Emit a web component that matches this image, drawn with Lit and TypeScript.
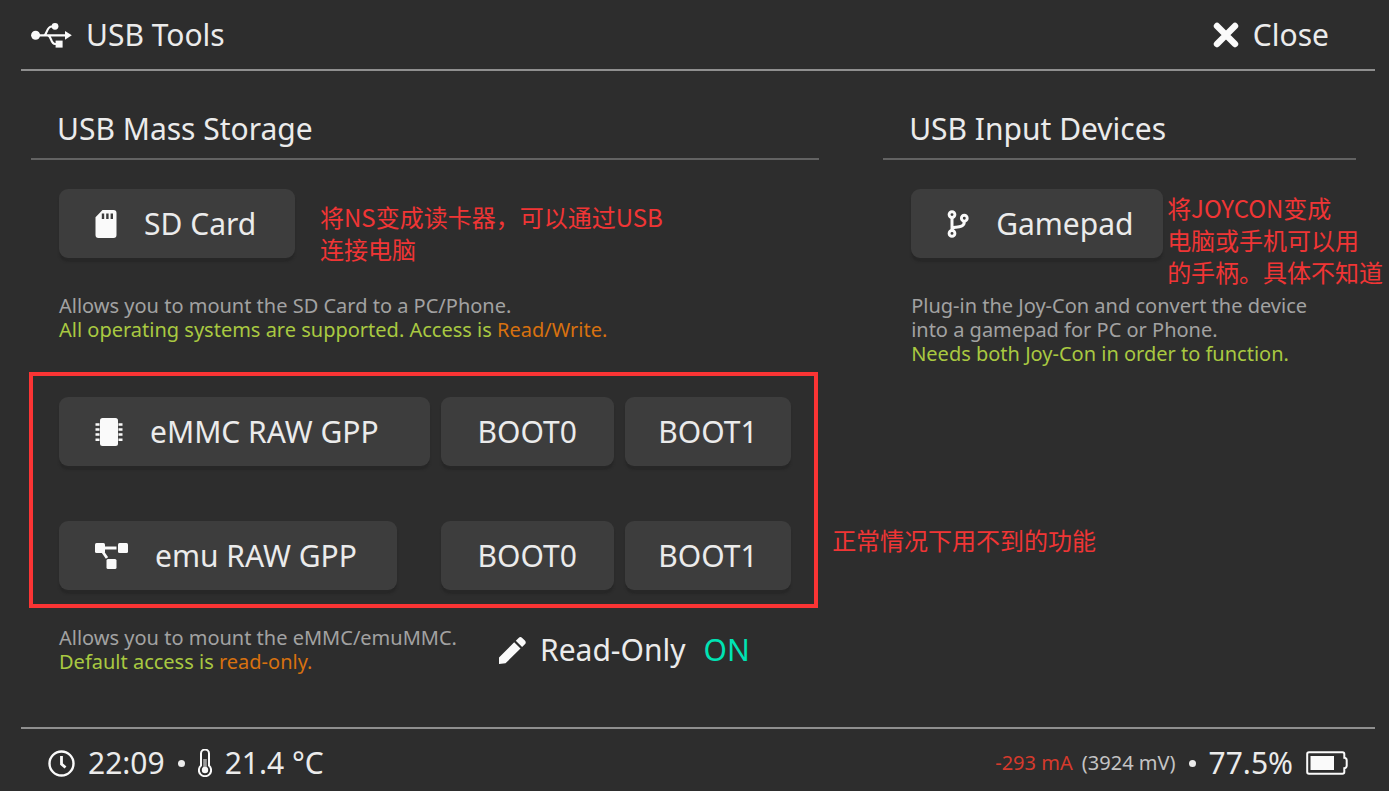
import { LitElement, html, svg, css, type TemplateResult } from "lit";
import { customElement, property, state } from "lit/decorators.js";

interface Glyph {
  w: number;
  h: number;
  body: TemplateResult;
}

const glyphs: Record<string, Glyph> = {
  usb: {
    w: 41,
    h: 26,
    body: svg`
      <circle cx="4.600" cy="13.300" r="4.500"/>
      <path d="M34 8.900 40.800 13.300 34 17.700z"/>
      <circle cx="24" cy="4.300" r="3.400"/>
      <rect x="24.600" y="18.600" width="7" height="7"/>
      <path d="M5 13.300H35M12.500 13.300C16.500 13.300 15 4.500 21 4.500H24M16.500 13.300C20.500 13.300 19.500 22 24 22H26" fill="none" stroke="currentColor" stroke-width="2.200"/>`,
  },
  close: {
    w: 26,
    h: 26,
    body: svg`<path d="M4 4 22 22M22 4 4 22" fill="none" stroke="currentColor" stroke-width="6.400" stroke-linecap="round"/>`,
  },
  sd: {
    w: 22,
    h: 28,
    body: svg`<path fill-rule="evenodd" d="M7.500 0H18.500A3 3 0 0 1 21.500 3V25A3 3 0 0 1 18.500 28H3.500A3 3 0 0 1 .5 25V7.200zM6.800 3.500V9H9.200V3.500zM11.200 3.500V9H13.600V3.500zM15.600 3.500V9H18V3.500z"/>`,
  },
  chip: {
    w: 28,
    h: 28,
    body: svg`
      <rect x="5" y="0" width="18" height="28" rx="2.500"/>
      <path d="M.5 6.500H4.500M.5 11.500H4.500M.5 16.500H4.500M.5 21.800H4.500M23.500 6.500H27.500M23.500 11.500H27.500M23.500 16.500H27.500M23.500 21.800H27.500" stroke="currentColor" stroke-width="2.400"/>`,
  },
  nodes: {
    w: 33,
    h: 28,
    body: svg`
      <rect x="0" y="1" width="10" height="10" rx="1.500"/>
      <rect x="23" y="1" width="10" height="10" rx="1.500"/>
      <rect x="11.500" y="17" width="10" height="10" rx="1.500"/>
      <path d="M9 6H21.500M7.500 9.500 12 16" fill="none" stroke="currentColor" stroke-width="2.800"/>`,
  },
  branch: {
    w: 22,
    h: 28,
    body: svg`<g fill="none" stroke="currentColor">
      <circle cx="5" cy="4.600" r="2.900" stroke-width="2.900"/>
      <circle cx="17.300" cy="8.200" r="2.900" stroke-width="2.900"/>
      <circle cx="5" cy="23.400" r="2.900" stroke-width="2.900"/>
      <path d="M5 7.500V20.500M17.300 11.500C17.300 17 12 17 8.500 17.200 6.500 17.300 5 18 5 20" stroke-width="3"/></g>`,
  },
  pencil: {
    w: 27,
    h: 27,
    body: svg`<path d="M0 20.500 15.200 5.300 21.500 11.600 6.500 26.300 0 27zM16.800 3.700 19.600 .9A2.600 2.600 0 0 1 23.200 .9L25.900 3.600A2.600 2.600 0 0 1 25.900 7.200L23.100 10z"/>`,
  },
  clock: {
    w: 27,
    h: 27,
    body: svg`<g fill="none" stroke="currentColor"><circle cx="13.500" cy="13.500" r="12" stroke-width="2.400"/><path d="M13.500 6V14L17.500 17.500" stroke-width="2.800"/></g>`,
  },
  thermo: {
    w: 14,
    h: 28,
    body: svg`
      <path d="M3 4.500A4 4 0 0 1 11 4.500V16.500A6.100 6.100 0 1 1 3 16.500z" fill="none" stroke="currentColor" stroke-width="2"/>
      <path d="M7 10V21" stroke="currentColor" stroke-width="3.600" opacity=".55"/>
      <circle cx="7" cy="21" r="3.200"/>`,
  },
  battery: {
    w: 42,
    h: 24,
    body: svg`
      <path d="M3 1.200H36.500A1.800 1.800 0 0 1 38.300 3V6.800A2.400 2.400 0 0 1 40.700 9.200V14.800A2.400 2.400 0 0 1 38.300 17.200V21A1.800 1.800 0 0 1 36.500 22.800H3A1.800 1.800 0 0 1 1.200 21V3A1.800 1.800 0 0 1 3 1.200z" fill="none" stroke="currentColor" stroke-width="2"/>
      <rect x="4.500" y="5" width="23.500" height="14"/>`,
  },
};

@customElement("ui-icon")
class UiIcon extends LitElement {
  @property() name = "usb";

  static styles = css`
    :host {
      display: inline-flex;
      flex: none;
      color: #fafafa;
    }
    .glyph {
      display: block;
      fill: currentColor;
    }
  `;

  render() {
    const g = glyphs[this.name];
    return html`<svg class="glyph" width=${g.w} height=${g.h} viewBox="0 0 ${g.w} ${g.h}" aria-hidden="true">${g.body}</svg>`;
  }
}

@customElement("app-root")
class AppRoot extends LitElement {
  @state() private readOnly = true;

  static styles = css`
    :host {
      display: flex;
      flex-direction: column;
      box-sizing: border-box;
      min-height: 100vh;
      padding: 0 14px 0 21px;
      background: #2d2d2d;
      color: #ebebeb;
      font: 400 30px/40px "Noto Sans", "Noto Sans CJK SC", sans-serif;
      overflow: hidden;
    }
    button {
      display: flex;
      align-items: center;
      border: 0;
      margin: 0;
      padding: 0;
      background: none;
      color: inherit;
      font: inherit;
      white-space: nowrap;
      cursor: pointer;
    }
    h1,
    h2,
    p {
      margin: 0;
      font-weight: inherit;
      font-size: inherit;
    }
    .bar {
      display: flex;
      align-items: center;
      justify-content: space-between;
    }
    .top {
      padding: 15px 46px 14px 10px;
      border-bottom: 2px solid #8f8f8f;
    }
    .title {
      display: flex;
      align-items: center;
      gap: 14px;
    }
    .columns {
      flex: 1;
      display: grid;
      grid-template-columns: 5fr 3fr;
      gap: 64px;
      padding: 38px 19px 0 10px;
    }
    .heading {
      padding: 0 26px 9px;
      border-bottom: 2px solid #626262;
    }
    .group {
      padding: 29px 0 0 28px;
    }
    .anchor {
      position: relative;
      width: fit-content;
    }
    .key {
      box-sizing: border-box;
      height: 69px;
      padding: 0 28px 0 36px;
      gap: 27px;
      border-radius: 9px;
      background: #3d3d3d;
      box-shadow: 0 4px 2px #272727;
    }
    .sd {
      width: 236px;
    }
    .pad {
      width: 252px;
    }
    .emu {
      width: 338px;
    }
    .boot {
      justify-content: center;
      padding: 0;
    }
    .hint {
      font-size: 20px;
      line-height: 24px;
      color: #a2a2a2;
    }
    .gap {
      padding-top: 36px;
    }
    .ok {
      color: #a9c941;
    }
    .warn {
      color: #d8710f;
    }
    .frame {
      position: relative;
      margin: 30px 1px 0 -2px;
      padding: 21px 23px 14px 26px;
      border: 4px solid #fb3434;
      display: grid;
      grid-template-columns: 370fr 173fr 166fr;
      gap: 55px 11px;
    }
    .note {
      position: absolute;
      left: 100%;
      color: #f03535;
      font: 400 24px/32px "Noto Sans CJK SC", sans-serif;
      white-space: nowrap;
    }
    .note-sd {
      top: 12px;
      padding-left: 25px;
    }
    .note-pad {
      top: 3px;
      padding-left: 4px;
    }
    .note-frame {
      bottom: 48px;
      padding-left: 18px;
    }
    .access {
      display: grid;
      grid-template-columns: 440px auto;
      justify-content: start;
      align-items: center;
      padding: 18px 0 0 28px;
    }
    .toggle {
      gap: 14px;
    }
    .state {
      margin-left: 4px;
      color: #00e3b4;
    }
    .bottom {
      padding: 14px 27px 8px 27px;
      border-top: 2px solid #8f8f8f;
    }
    .status {
      display: flex;
      align-items: center;
      gap: 13px;
    }
    .dot {
      width: 7px;
      height: 7px;
      border-radius: 50%;
      background: currentColor;
    }
    .power {
      font-size: 20px;
      color: #c4c4c4;
    }
    .drain {
      color: #d63a2c;
      margin-right: 4px;
    }
  `;

  private flip() {
    this.readOnly = !this.readOnly;
  }

  render() {
    return html`
      <header class="bar top">
        <h1 class="title"><ui-icon name="usb"></ui-icon>USB Tools</h1>
        <button class="title"><ui-icon name="close"></ui-icon>Close</button>
      </header>
      <main class="columns">
        <section>
          <h2 class="heading">USB Mass Storage</h2>
          <div class="group">
            <div class="anchor">
              <button class="key sd"><ui-icon name="sd"></ui-icon>SD Card</button>
              <p class="note note-sd">将NS变成读卡器，可以通过USB<br />连接电脑</p>
            </div>
            <p class="hint gap">
              Allows you to mount the SD Card to a PC/Phone.<br />
              <span class="ok">All operating systems are supported. Access is</span>
              <span class="warn">Read/Write.</span>
            </p>
          </div>
          <div class="frame">
            <button class="key"><ui-icon name="chip"></ui-icon>eMMC RAW GPP</button>
            <button class="key boot">BOOT0</button>
            <button class="key boot">BOOT1</button>
            <button class="key emu"><ui-icon name="nodes"></ui-icon>emu RAW GPP</button>
            <button class="key boot">BOOT0</button>
            <button class="key boot">BOOT1</button>
            <p class="note note-frame">正常情况下用不到的功能</p>
          </div>
          <div class="access">
            <p class="hint">
              Allows you to mount the eMMC/emuMMC.<br />
              <span class="ok">Default access is</span>
              <span class="warn">read-only.</span>
            </p>
            <button class="toggle" aria-pressed=${this.readOnly} @click=${this.flip}>
              <ui-icon name="pencil"></ui-icon>Read-Only
              <span class="state">${this.readOnly ? "ON" : "OFF"}</span>
            </button>
          </div>
        </section>
        <section>
          <h2 class="heading">USB Input Devices</h2>
          <div class="group">
            <div class="anchor">
              <button class="key pad"><ui-icon name="branch"></ui-icon>Gamepad</button>
              <p class="note note-pad">将JOYCON变成<br />电脑或手机可以用<br />的手柄。具体不知道</p>
            </div>
            <p class="hint gap">
              Plug-in the Joy-Con and convert the device<br />
              into a gamepad for PC or Phone.<br />
              <span class="ok">Needs both Joy-Con in order to function.</span>
            </p>
          </div>
        </section>
      </main>
      <footer class="bar bottom">
        <div class="status">
          <ui-icon name="clock"></ui-icon><span>22:09</span>
          <i class="dot"></i>
          <ui-icon name="thermo"></ui-icon><span>21.4 °C</span>
        </div>
        <div class="status">
          <span class="power"><span class="drain">-293 mA</span> (3924 mV)</span>
          <i class="dot"></i>
          <span>77.5%</span><ui-icon name="battery"></ui-icon>
        </div>
      </footer>
    `;
  }
}
